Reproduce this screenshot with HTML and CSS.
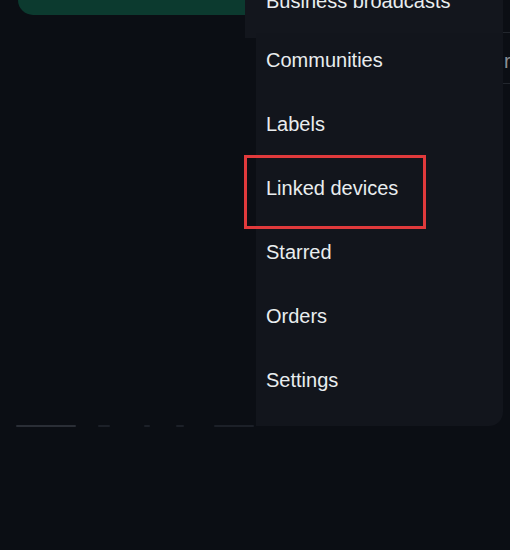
FILE: index.html
```html
<!DOCTYPE html>
<html lang="en">
<head>
<meta charset="utf-8">
<title>Menu</title>
<link rel="stylesheet" href="styles.css">
</head>
<body>
<div class="page">
  <div class="banner"></div>
  <div class="side-pane">
    <div class="pane-row">r</div>
  </div>
  <div class="faint-line">
    <span class="d1"></span><span class="d2"></span><span class="d3"></span><span class="d4"></span><span class="d5"></span>
  </div>
  <nav class="menu">
    <div class="item item-first">Business broadcasts</div>
    <div class="menu-body">
      <div class="item">Communities</div>
      <div class="item">Labels</div>
      <div class="item">Linked devices</div>
      <div class="item">Starred</div>
      <div class="item">Orders</div>
      <div class="item">Settings</div>
    </div>
  </nav>
  <div class="highlight"></div>
</div>
</body>
</html>
```

FILE: styles.css
```css
* { box-sizing: border-box; }
html, body {
  margin: 0;
  padding: 0;
  background: #0b0e14;
  width: 510px;
  height: 550px;
  overflow: hidden;
}
.page {
  position: relative;
  width: 510px;
  height: 550px;
  font-family: "Liberation Sans", Arial, sans-serif;
}
.banner {
  margin-left: 18px;
  width: 240px;
  height: 15px;
  background: #0c3a2f;
  border-bottom-left-radius: 18px;
}
.side-pane {
  position: absolute;
  left: 495px;
  top: 32px;
  width: 15px;
  height: 52px;
  border-top: 1px solid #22262d;
  border-bottom: 1px solid #22262d;
}
.pane-row {
  padding-left: 9px;
  padding-top: 17px;
  color: #8a8f96;
  font-size: 20px;
  line-height: 22px;
}
.faint-line {
  position: absolute;
  left: 16px;
  top: 425px;
  display: flex;
  align-items: center;
}
.faint-line span {
  display: block;
  height: 2px;
  background: #1c2028;
  border-radius: 1px;
}
.faint-line .d1 { width: 60px; background: #2a2e36; }
.faint-line .d2 { width: 12px; margin-left: 22px; }
.faint-line .d3 { width: 6px; margin-left: 34px; }
.faint-line .d4 { width: 8px; margin-left: 26px; }
.faint-line .d5 { width: 40px; margin-left: 30px; }
.menu {
  position: absolute;
  left: 256px;
  top: -31px;
  width: 247px;
}
.item {
  height: 64px;
  line-height: 64px;
  padding-left: 10px;
  font-size: 20px;
  color: #e9edef;
  white-space: nowrap;
}
.item-first {
  margin-left: -11px;
  padding-left: 21px;
  height: 69px;
  line-height: 64px;
  background: #13161d;
  width: 258px;
}
.menu-body {
  background: #12151c;
  margin-top: -5px;
  padding-bottom: 14px;
  border-bottom-right-radius: 14px;
}
.menu-body .item:first-child {
  height: 59px;
  line-height: 54px;
}
.highlight {
  position: absolute;
  left: 244px;
  top: 155px;
  width: 182px;
  height: 74px;
  border: 3px solid #e13a3c;
}
```
